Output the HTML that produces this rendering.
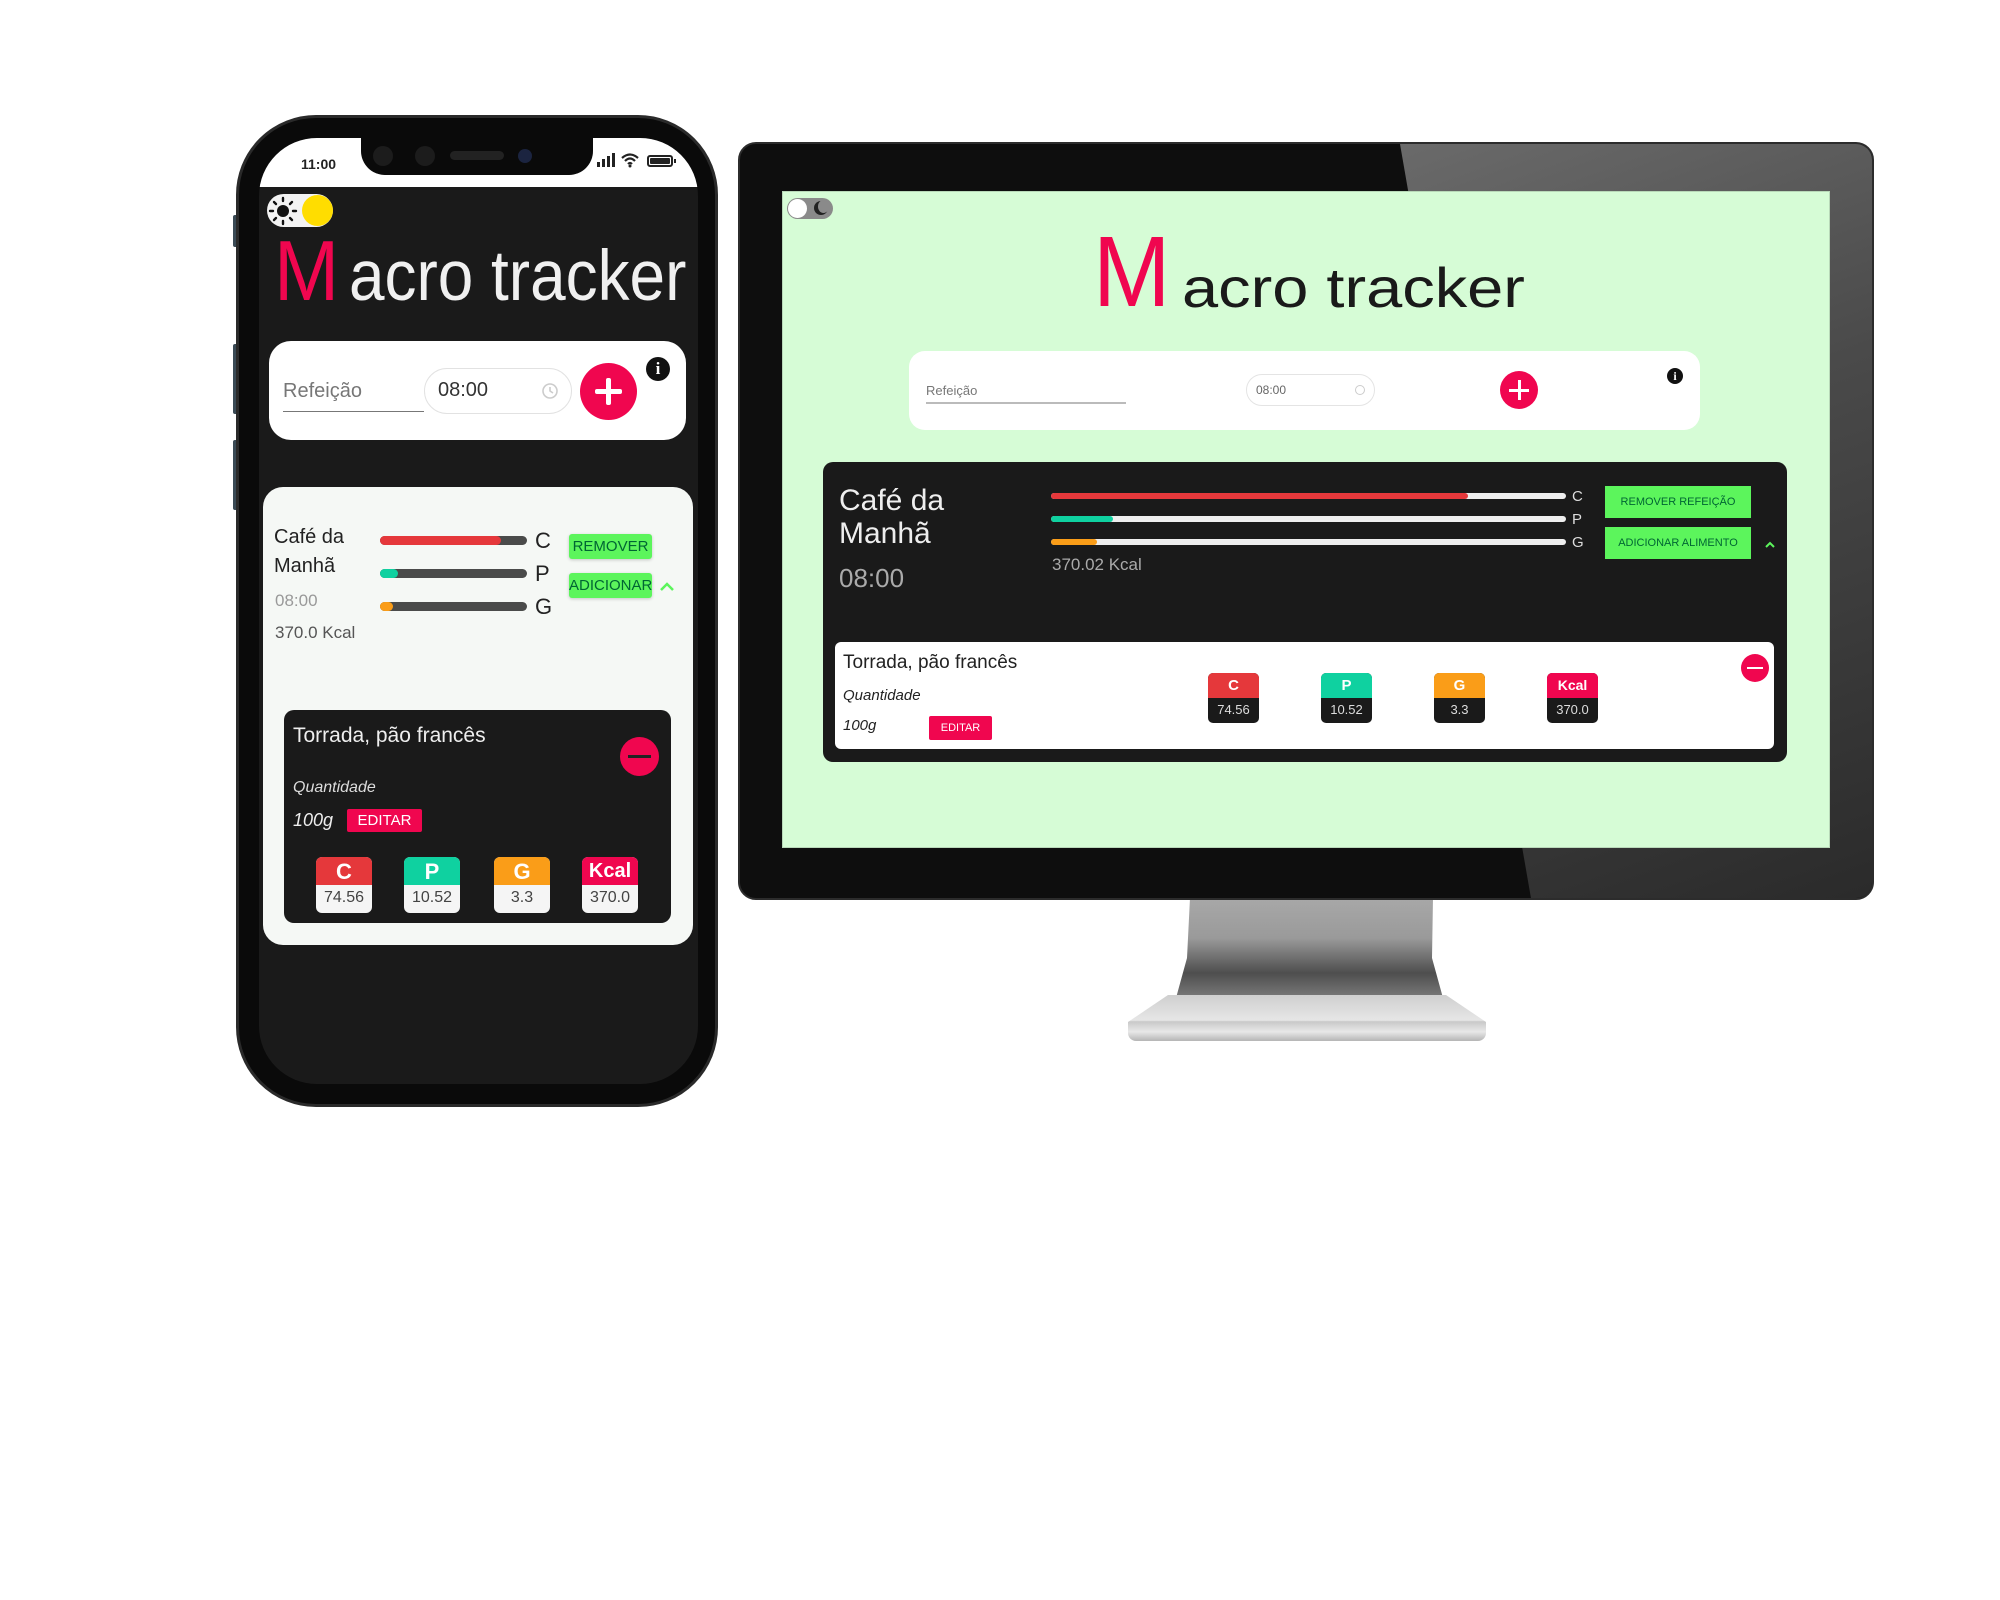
<!DOCTYPE html>
<html><head><meta charset="utf-8"><style>
*{margin:0;padding:0;box-sizing:border-box}
body{width:2000px;height:1600px;background:#fff;position:relative;overflow:hidden;font-family:"Liberation Sans",sans-serif}
.a{position:absolute}
.t{white-space:nowrap}
.ttl{position:absolute;white-space:nowrap;line-height:1;transform-origin:left top}
</style></head><body>

<!-- ===== PHONE ===== -->
<div class="a" style="left:233px;top:215px;width:6px;height:32px;background:#3a4a55;border-radius:2px"></div>
<div class="a" style="left:233px;top:344px;width:6px;height:70px;background:#3a4a55;border-radius:2px"></div>
<div class="a" style="left:233px;top:440px;width:6px;height:70px;background:#3a4a55;border-radius:2px"></div>
<div class="a" style="left:236px;top:115px;width:482px;height:992px;background:#0a0a0a;border-radius:80px;border:3px solid #2a2a2a"></div>
<div class="a" style="left:259px;top:138px;width:439px;height:946px;background:#1a1a1a;border-radius:58px;overflow:hidden">
  <div class="a" style="left:0;top:0;width:439px;height:49px;background:#fff"></div>
</div>
<!-- notch -->
<div class="a" style="left:361px;top:138px;width:232px;height:37px;background:#0a0a0a;border-radius:0 0 24px 24px"></div>
<div class="a" style="left:373px;top:146px;width:20px;height:20px;background:#1c1c1c;border-radius:50%"></div>
<div class="a" style="left:415px;top:146px;width:20px;height:20px;background:#1c1c1c;border-radius:50%"></div>
<div class="a" style="left:450px;top:151px;width:54px;height:9px;background:#222;border-radius:5px"></div>
<div class="a" style="left:518px;top:149px;width:14px;height:14px;background:#1b2440;border-radius:50%"></div>
<div class="a t" style="left:301px;top:156px;font-size:14px;font-weight:bold;color:#222">11:00</div>
<!-- status icons -->
<div class="a" style="left:597px;top:162px;width:3px;height:5px;background:#222"></div>
<div class="a" style="left:602px;top:159px;width:3px;height:8px;background:#222"></div>
<div class="a" style="left:607px;top:156px;width:3px;height:11px;background:#222"></div>
<div class="a" style="left:612px;top:153px;width:3px;height:14px;background:#222"></div>
<svg class="a" style="left:621px;top:152px" width="18" height="16" viewBox="0 0 18 16"><path d="M1 6 Q9 -1 17 6 M4 9 Q9 4 14 9 M7 12 Q9 10 11 12" stroke="#222" stroke-width="2.2" fill="none"/><circle cx="9" cy="14" r="1.5" fill="#222"/></svg>
<div class="a" style="left:647px;top:155px;width:26px;height:12px;border:2px solid #222;border-radius:3px;padding:1px"><div style="width:100%;height:100%;background:#222;border-radius:1px"></div></div>
<div class="a" style="left:674px;top:159px;width:2px;height:4px;background:#222"></div>

<!-- toggle -->
<div class="a" style="left:267px;top:194px;width:66px;height:33px;background:#f3f3f3;border-radius:17px"></div>
<svg class="a" style="left:268px;top:196px" width="30" height="30" viewBox="0 0 30 30"><circle cx="15" cy="15" r="6" fill="#111"/><g stroke="#111" stroke-width="2.4" stroke-linecap="round"><path d="M15 2v3M15 25v3M2 15h3M25 15h3M6 6l2 2M22 22l2 2M6 24l2-2M22 8l2-2"/></g></svg>
<div class="a" style="left:302px;top:195px;width:31px;height:31px;background:#ffdd00;border-radius:50%"></div>

<!-- title phone -->
<div class="ttl" style="left:274px;top:229px;font-size:85px;color:#f0064f;transform:scaleX(0.92)">M</div>
<div class="ttl" style="left:349px;top:241px;font-size:71px;color:#f0f0f0;transform:scaleX(0.9)">acro tracker</div>

<!-- form card phone -->
<div class="a" style="left:269px;top:341px;width:417px;height:99px;background:#fff;border-radius:22px"></div>
<div class="a t" style="left:283px;top:380px;font-size:20px;color:#777">Refeição</div>
<div class="a" style="left:283px;top:411px;width:141px;height:1px;background:#777"></div>
<div class="a" style="left:424px;top:368px;width:148px;height:46px;border:1px solid #e2e2e2;border-radius:23px"></div>
<div class="a t" style="left:438px;top:379px;font-size:20px;color:#333">08:00</div>
<svg class="a" style="left:541px;top:382px" width="18" height="18" viewBox="0 0 18 18"><circle cx="9" cy="9" r="7" stroke="#ccc" stroke-width="1.6" fill="none"/><path d="M9 5v4l3 2" stroke="#ccc" stroke-width="1.6" fill="none"/></svg>
<div class="a" style="left:580px;top:363px;width:57px;height:57px;background:#f0064f;border-radius:50%"></div>
<div class="a" style="left:595px;top:389px;width:27px;height:5px;background:#fff;border-radius:2px"></div>
<div class="a" style="left:606px;top:378px;width:5px;height:27px;background:#fff;border-radius:2px"></div>
<div class="a" style="left:646px;top:357px;width:24px;height:24px;background:#111;border-radius:50%;color:#fff;font-size:17px;font-weight:bold;text-align:center;line-height:24px;font-family:'Liberation Serif',serif">i</div>

<!-- meal card phone -->
<div class="a" style="left:263px;top:487px;width:430px;height:458px;background:#f5f8f5;border-radius:20px"></div>
<div class="a t" style="left:274px;top:523px;font-size:20px;color:#222;line-height:29px">Café da<br>Manhã</div>
<div class="a t" style="left:275px;top:591px;font-size:17px;color:#999">08:00</div>
<div class="a t" style="left:275px;top:623px;font-size:17px;color:#555">370.0 Kcal</div>
<div class="a" style="left:380px;top:536px;width:147px;height:9px;background:#4a4b4a;border-radius:5px"><div style="width:82%;height:100%;background:#e5383b;border-radius:5px"></div></div>
<div class="a" style="left:380px;top:569px;width:147px;height:9px;background:#4a4b4a;border-radius:5px"><div style="width:12%;height:100%;background:#0fd1a0;border-radius:5px"></div></div>
<div class="a" style="left:380px;top:602px;width:147px;height:9px;background:#4a4b4a;border-radius:5px"><div style="width:9%;height:100%;background:#fa9d18;border-radius:5px"></div></div>
<div class="a t" style="left:535px;top:528px;font-size:22px;color:#222">C</div>
<div class="a t" style="left:535px;top:561px;font-size:22px;color:#222">P</div>
<div class="a t" style="left:535px;top:594px;font-size:22px;color:#222">G</div>
<div class="a t" style="left:569px;top:534px;width:83px;height:25px;background:#5cf55c;border-radius:3px;font-size:15px;color:#063;text-align:center;line-height:25px;box-shadow:0 1px 3px rgba(0,0,0,.2)">REMOVER</div>
<div class="a t" style="left:569px;top:573px;width:83px;height:25px;background:#5cf55c;border-radius:3px;font-size:15px;color:#063;text-align:center;line-height:25px;box-shadow:0 1px 3px rgba(0,0,0,.2)">ADICIONAR</div>
<svg class="a" style="left:659px;top:581px" width="16" height="12" viewBox="0 0 16 12"><path d="M2 9l6-6 6 6" stroke="#5cf55c" stroke-width="2.5" fill="none"/></svg>

<!-- food card phone -->
<div class="a" style="left:284px;top:710px;width:387px;height:213px;background:#1a1a1a;border-radius:10px"></div>
<div class="a t" style="left:293px;top:724px;font-size:21px;color:#eee">Torrada, pão francês</div>
<div class="a" style="left:620px;top:737px;width:39px;height:39px;background:#f0064f;border-radius:50%"></div>
<div class="a" style="left:628px;top:755px;width:23px;height:3px;background:#222"></div>
<div class="a t" style="left:293px;top:779px;font-size:16px;font-style:italic;color:#ddd">Quantidade</div>
<div class="a t" style="left:293px;top:810px;font-size:18px;font-style:italic;color:#eee">100g</div>
<div class="a t" style="left:347px;top:809px;width:75px;height:23px;background:#f0064f;border-radius:2px;font-size:15px;color:#fff;text-align:center;line-height:23px">EDITAR</div>

<div class="a" style="left:316px;top:857px;width:56px;height:56px;border-radius:6px;overflow:hidden;background:#f5f5f5"><div style="height:28px;background:#e5383b;color:#fff;font-size:22px;font-weight:bold;text-align:center;line-height:29px">C</div><div style="text-align:center;font-size:16px;color:#444;line-height:26px">74.56</div></div>
<div class="a" style="left:404px;top:857px;width:56px;height:56px;border-radius:6px;overflow:hidden;background:#f5f5f5"><div style="height:28px;background:#0fd1a0;color:#fff;font-size:22px;font-weight:bold;text-align:center;line-height:29px">P</div><div style="text-align:center;font-size:16px;color:#444;line-height:26px">10.52</div></div>
<div class="a" style="left:494px;top:857px;width:56px;height:56px;border-radius:6px;overflow:hidden;background:#f5f5f5"><div style="height:28px;background:#fa9d18;color:#fff;font-size:22px;font-weight:bold;text-align:center;line-height:29px">G</div><div style="text-align:center;font-size:16px;color:#444;line-height:26px">3.3</div></div>
<div class="a" style="left:582px;top:857px;width:56px;height:56px;border-radius:6px;overflow:hidden;background:#f5f5f5"><div style="height:28px;background:#f0064f;color:#fff;font-size:20px;font-weight:bold;text-align:center;line-height:29px">Kcal</div><div style="text-align:center;font-size:16px;color:#444;line-height:26px">370.0</div></div>

<!-- ===== MONITOR ===== -->
<!-- stand -->
<div class="a" style="left:1176px;top:898px;width:267px;height:100px;background:linear-gradient(#a8a8a8,#9a9a9a 40%,#4e4e4e 75%,#7a7a7a);clip-path:polygon(14px 0,257px 0,256px 60px,267px 100px,0 100px,11px 60px)"></div>
<div class="a" style="left:1128px;top:995px;width:358px;height:46px;background:linear-gradient(#cfcfcf,#e6e6e6 55%,#c9c9c9 58%,#e8e8e8 80%,#b5b5b5);clip-path:polygon(40px 0,318px 0,358px 27px,358px 46px,0 46px,0 27px);border-radius:0 0 8px 8px"></div>

<div class="a" style="left:738px;top:142px;width:1136px;height:758px;background:#0e0e0e;border-radius:18px;overflow:hidden;border:2px solid #2c2c2c">
  <div class="a" style="left:660px;top:0;width:480px;height:760px;background:linear-gradient(160deg,#6a6a6a,#4a4a4a 40%,#2a2a2a);clip-path:polygon(0 0,480px 0,480px 760px,132px 760px)"></div>
</div>
<div class="a" style="left:782px;top:191px;width:1048px;height:657px;background:#d6fcd6;border:1px solid #b8d8b8"></div>

<!-- toggle desktop -->
<div class="a" style="left:787px;top:198px;width:46px;height:21px;background:#8a8a8a;border-radius:11px"></div>
<div class="a" style="left:788px;top:199px;width:19px;height:19px;background:#fff;border-radius:50%"></div>
<div class="a" style="left:814px;top:201px;width:14px;height:14px;background:#222;border-radius:50%"></div>
<div class="a" style="left:818px;top:200px;width:11px;height:13px;background:#8a8a8a;border-radius:50%"></div>

<!-- title desktop -->
<div class="ttl" style="left:1093px;top:222px;font-size:100px;color:#f0064f;transform:scaleX(0.93)">M</div>
<div class="ttl" style="left:1182px;top:260px;font-size:56px;color:#1a1a1a;transform:scaleX(1.16)">acro tracker</div>

<!-- form card desktop -->
<div class="a" style="left:909px;top:351px;width:791px;height:79px;background:#fff;border-radius:16px"></div>
<div class="a t" style="left:926px;top:383px;font-size:13px;color:#777">Refeição</div>
<div class="a" style="left:926px;top:402px;width:200px;height:2px;background:#bbb"></div>
<div class="a" style="left:1246px;top:374px;width:129px;height:32px;border:1px solid #e4e4e4;border-radius:16px"></div>
<div class="a t" style="left:1256px;top:383px;font-size:12px;color:#666">08:00</div>
<div class="a" style="left:1355px;top:385px;width:10px;height:10px;border:1px solid #ccc;border-radius:50%"></div>
<div class="a" style="left:1500px;top:371px;width:38px;height:38px;background:#f0064f;border-radius:50%"></div>
<div class="a" style="left:1509px;top:389px;width:20px;height:3px;background:#fff"></div>
<div class="a" style="left:1518px;top:380px;width:3px;height:20px;background:#fff"></div>
<div class="a" style="left:1667px;top:368px;width:16px;height:16px;background:#111;border-radius:50%;color:#fff;font-size:12px;font-weight:bold;text-align:center;line-height:16px;font-family:'Liberation Serif',serif">i</div>

<!-- meal card desktop -->
<div class="a" style="left:823px;top:462px;width:964px;height:300px;background:#1a1a1a;border-radius:10px"></div>
<div class="a t" style="left:839px;top:484px;font-size:30px;color:#eee;line-height:33px">Café da<br>Manhã</div>
<div class="a t" style="left:839px;top:563px;font-size:26px;color:#aaa;font-weight:300">08:00</div>
<div class="a" style="left:1051px;top:493px;width:515px;height:6px;background:#eee;border-radius:3px"><div style="width:81%;height:100%;background:#e5383b;border-radius:3px"></div></div>
<div class="a" style="left:1051px;top:516px;width:515px;height:6px;background:#eee;border-radius:3px"><div style="width:12%;height:100%;background:#0fd1a0;border-radius:3px"></div></div>
<div class="a" style="left:1051px;top:539px;width:515px;height:6px;background:#eee;border-radius:3px"><div style="width:9%;height:100%;background:#fa9d18;border-radius:3px"></div></div>
<div class="a t" style="left:1572px;top:488px;font-size:15px;color:#ddd">C</div>
<div class="a t" style="left:1572px;top:511px;font-size:15px;color:#ddd">P</div>
<div class="a t" style="left:1572px;top:534px;font-size:15px;color:#ddd">G</div>
<div class="a t" style="left:1052px;top:555px;font-size:17px;color:#aaa">370.02 Kcal</div>
<div class="a t" style="left:1605px;top:486px;width:146px;height:32px;background:#5cf55c;font-size:11px;color:#063;text-align:center;line-height:32px">REMOVER REFEIÇÃO</div>
<div class="a t" style="left:1605px;top:527px;width:146px;height:32px;background:#5cf55c;font-size:11px;color:#063;text-align:center;line-height:32px">ADICIONAR ALIMENTO</div>
<svg class="a" style="left:1764px;top:540px" width="12" height="9" viewBox="0 0 12 9"><path d="M2 7l4-4 4 4" stroke="#5cf55c" stroke-width="2" fill="none"/></svg>

<!-- food card desktop -->
<div class="a" style="left:835px;top:642px;width:939px;height:107px;background:#fff;border-radius:6px"></div>
<div class="a t" style="left:843px;top:652px;font-size:19px;color:#222">Torrada, pão francês</div>
<div class="a t" style="left:843px;top:687px;font-size:15px;font-style:italic;color:#222">Quantidade</div>
<div class="a t" style="left:843px;top:717px;font-size:15px;font-style:italic;color:#222">100g</div>
<div class="a t" style="left:929px;top:716px;width:63px;height:24px;background:#f0064f;border-radius:2px;font-size:11px;color:#fff;text-align:center;line-height:24px">EDITAR</div>
<div class="a" style="left:1741px;top:654px;width:28px;height:28px;background:#f0064f;border-radius:50%"></div>
<div class="a" style="left:1747px;top:667px;width:16px;height:2px;background:#fff"></div>

<div class="a" style="left:1208px;top:673px;width:51px;height:50px;border-radius:5px;overflow:hidden;background:#1a1a1a"><div style="height:25px;background:#e5383b;color:#fff;font-size:15px;font-weight:bold;text-align:center;line-height:25px">C</div><div style="text-align:center;font-size:13px;color:#ddd;line-height:24px">74.56</div></div>
<div class="a" style="left:1321px;top:673px;width:51px;height:50px;border-radius:5px;overflow:hidden;background:#1a1a1a"><div style="height:25px;background:#0fd1a0;color:#fff;font-size:15px;font-weight:bold;text-align:center;line-height:25px">P</div><div style="text-align:center;font-size:13px;color:#ddd;line-height:24px">10.52</div></div>
<div class="a" style="left:1434px;top:673px;width:51px;height:50px;border-radius:5px;overflow:hidden;background:#1a1a1a"><div style="height:25px;background:#fa9d18;color:#fff;font-size:15px;font-weight:bold;text-align:center;line-height:25px">G</div><div style="text-align:center;font-size:13px;color:#ddd;line-height:24px">3.3</div></div>
<div class="a" style="left:1547px;top:673px;width:51px;height:50px;border-radius:5px;overflow:hidden;background:#1a1a1a"><div style="height:25px;background:#f0064f;color:#fff;font-size:14px;font-weight:bold;text-align:center;line-height:25px">Kcal</div><div style="text-align:center;font-size:13px;color:#ddd;line-height:24px">370.0</div></div>

</body></html>
